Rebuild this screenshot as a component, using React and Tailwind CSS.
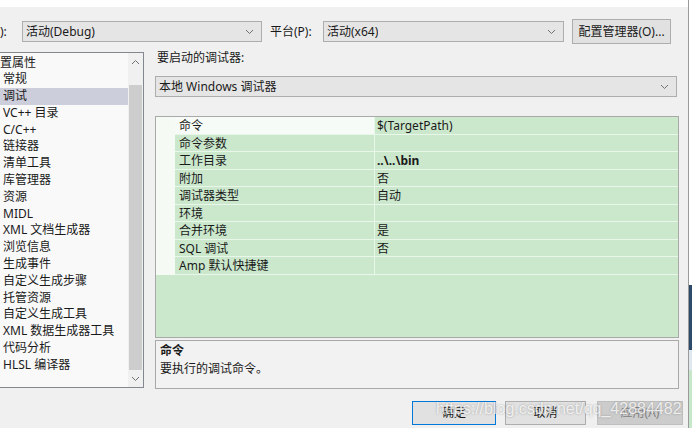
import React from 'react';

const treeItems = [
  '置属性', '常规', '调试', 'VC++ 目录', 'C/C++', '链接器', '清单工具', '库管理器', '资源', 'MIDL',
  'XML 文档生成器', '浏览信息', '生成事件', '自定义生成步骤', '托管资源', '自定义生成工具',
  'XML 数据生成器工具', '代码分析', 'HLSL 编译器',
];

const props = [
  { name: '命令', value: '$(TargetPath)' },
  { name: '命令参数', value: '' },
  { name: '工作目录', value: '..\\..\\bin', bold: true },
  { name: '附加', value: '否' },
  { name: '调试器类型', value: '自动' },
  { name: '环境', value: '' },
  { name: '合并环境', value: '是' },
  { name: 'SQL 调试', value: '否' },
  { name: 'Amp 默认快捷键', value: '' },
];

function Chevron({ up = false }) {
  return (
    <svg width="9" height="6" viewBox="0 0 9 6" className="shrink-0">
      <path d={up ? 'M1 5 L4.5 1.5 L8 5' : 'M1 1 L4.5 4.5 L8 1'} fill="none" stroke="#707070" strokeWidth="1" />
    </svg>
  );
}

function Dropdown({ className, children }) {
  return (
    <div className={`h-[21px] flex items-center justify-between bg-[#e5e5e5] border border-[#adadad] pl-[3px] pr-[7px] ${className}`}>
      <span className="truncate">{children}</span>
      <Chevron />
    </div>
  );
}

export default function App() {
  return (
    <div className="w-[692px] h-[428px] bg-[#f0f0f0] flex overflow-hidden relative text-[12px] text-[#1a1a1a] font-[family-name:Noto_Sans,Noto_Sans_CJK_SC,sans-serif]">
      <div className="w-[688px] flex flex-col">
        <div className="h-[7px] bg-white" />

        {/* Configuration / platform row */}
        <div className="flex items-center h-[25px] mt-[12px]">
          <span className="w-[22px]">):</span>
          <Dropdown className="w-[240px]">活动(Debug)</Dropdown>
          <span className="ml-[8px] w-[53px]">平台(P):</span>
          <Dropdown className="w-[241px]">活动(x64)</Dropdown>
          <button className="ml-[8px] w-[99px] h-[25px] bg-[#e1e1e1] border border-[#adadad]">配置管理器(O)...</button>
        </div>

        <div className="flex">
          {/* Tree */}
          <div className="mt-[8px] w-[144px] h-[336px] flex border-y border-r border-[#828790] bg-[#f9f9f9]">
            <div className="w-[128px] pt-[1.5px] flex flex-col">
              {treeItems.map((t, i) => (
                <div
                  key={t}
                  className={`h-[16.8px] leading-[16.8px] whitespace-nowrap ${i === 0 ? 'pl-0' : 'pl-[3px]'} ${i === 2 ? 'bg-[#cccedb]' : ''}`}
                >
                  {t}
                </div>
              ))}
            </div>
            <div className="w-[15px] flex flex-col bg-[#f0f0f0]">
              <div className="h-[17px] flex items-center justify-center"><Chevron up /></div>
              <div className="h-[15px]" />
              <div className="h-[285px] mx-px bg-[#cdcdcd]" />
              <div className="flex-1 flex items-center justify-center"><Chevron /></div>
            </div>
          </div>

          {/* Debugger page */}
          <div className="ml-[11px] w-[524px] flex flex-col">
            <div className="mt-[6px] h-[16px] leading-[16px] pl-[2px]">要启动的调试器:</div>
            <Dropdown className="mt-[10px] w-[522px]">本地 Windows 调试器</Dropdown>

            <div className="mt-[19px] h-[222px] border border-[#a9a9a9] bg-[#cbe8cd] flex flex-col">
              {props.map((p, i) => (
                <div key={p.name} className="h-[17.5px] flex">
                  <div className="w-[19px] bg-[#f5faf5]" />
                  <div className={`w-[200px] pl-[4px] leading-[17px] border-b border-r border-[#e9f6ea] ${i === 0 ? 'bg-[#f7fbf7]' : ''}`}>
                    {p.name}
                  </div>
                  <div className={`flex-1 pl-[2px] leading-[17px] border-b border-[#e9f6ea] ${p.bold ? 'font-bold' : ''}`}>
                    {p.value}
                  </div>
                </div>
              ))}
            </div>

            <div className="mt-[2px] h-[49px] border border-[#a9a9a9] bg-[#f2f2f2] pl-[4px] pt-[1px] leading-[18px]">
              <div className="font-bold">命令</div>
              <div>要执行的调试命令。</div>
            </div>
          </div>
        </div>

        {/* Dialog buttons */}
        <div className="flex mt-[12px] pl-[412px]">
          <button className="w-[84px] h-[24px] bg-[#e1e1e1] border border-[#0078d7]">确定</button>
          <button className="ml-[9px] w-[81px] h-[24px] bg-[#e1e1e1] border border-[#adadad]">取消</button>
          <button className="ml-[11px] w-[86px] h-[24px] bg-[#cccccc] border border-[#bfbfbf] text-[#838383]">应用(A)</button>
        </div>
      </div>

      <div className="w-px bg-[#9a9a9a]" />
      <div className="flex-1 flex flex-col">
        <div className="h-[285px] bg-white" />
        <div className="h-[65px] bg-[#2d4a6b]" />
        <div className="h-[20px] bg-[#dfe8ef]" />
        <div className="flex-1 bg-[#c8e6c9]" />
      </div>

      {/* Watermark */}
      <div className="absolute left-[436px] top-[399px] text-[16px] leading-[20px] text-white/80 font-[family-name:Liberation_Sans,sans-serif] [text-shadow:0_0_2px_rgba(100,100,100,0.6)] pointer-events-none">
        https://blog.csdn.net/qq_42884482
      </div>
    </div>
  );
}
